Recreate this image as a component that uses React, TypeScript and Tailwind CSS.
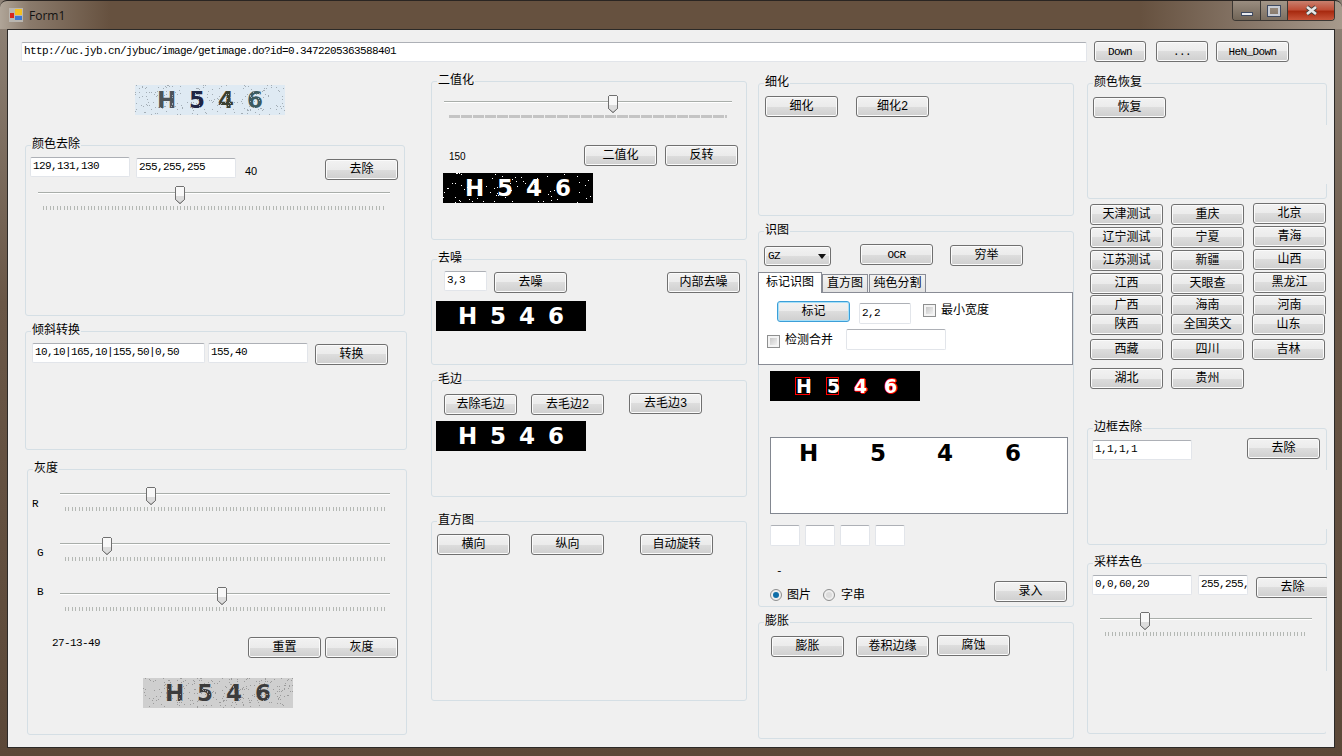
import type { ReactNode } from 'react';

const ASCII = "text-[11px] tracking-[-0.6px]";

function Btn({ children, className = "", ascii = false, focused = false, w = "w-[73px]" }: { children: ReactNode; className?: string; ascii?: boolean; focused?: boolean; w?: string }) {
  return (
    <div
      className={
        "shrink-0 h-[21px] pt-px flex items-center justify-center rounded-[3px] border bg-[linear-gradient(#f2f2f2_0%,#ebebeb_50%,#dddddd_50%,#cfcfcf_100%)] " +
        (focused ? "border-[#3c9fd8] shadow-[inset_0_0_0_1px_#a8e0f8] " : "border-[#707070] shadow-[inset_0_0_0_1px_#fbfbfb] ") +
        (ascii ? ASCII + " " : "") +
        w + " " +
        className
      }
    >
      {children}
    </div>
  );
}

function Input({ value = "", className = "" }: { value?: string; className?: string }) {
  return (
    <div className={"shrink-0 h-[20px] bg-white border border-[#e2e5ea] border-t-[#adb0b6] rounded-[2px] pl-[2px] pt-[2px] overflow-hidden whitespace-nowrap " + ASCII + " " + className}>
      {value}
    </div>
  );
}

function Group({ title, className = "", children }: { title: string; className?: string; children?: ReactNode }) {
  return (
    <div className={"relative shrink-0 border border-[#d5dfe5] rounded-[3px] " + className}>
      <span className="absolute -top-[8px] left-[5px] bg-[#f0f0f0] px-px leading-[14px] whitespace-nowrap">{title}</span>
      {children}
    </div>
  );
}

function Slider({ width, at, dashed = false, className = "" }: { width: number; at: number; dashed?: boolean; className?: string }) {
  return (
    <div className={"relative flow-root shrink-0 h-[26px] " + className} style={{ width }}>
      <div className="mt-[6px] h-[2px] bg-[#a9aeaa] border-b border-white" />
      {dashed ? (
        <div className="mx-[5px] mt-[12px] h-[3px] bg-[repeating-linear-gradient(90deg,#c4c4c4_0,#c4c4c4_11px,transparent_11px,transparent_12px)]" />
      ) : (
        <div className="mx-[5px] mt-[12px] h-[4px] bg-[repeating-linear-gradient(90deg,#b4b8b4_0,#b4b8b4_1px,transparent_1px,transparent_3.43px)]" />
      )}
      <svg className="absolute top-0" style={{ left: at - 5 }} width="10" height="18" viewBox="0 0 10 18">
        <path d="M1.5.5h7l1 1v12l-4.5 4-4.5-4v-12z" fill="#f8f8f8" stroke="#707070" />
        <path d="M1 10h8v3.4L5 17l-4-3.6z" fill="#dcdcdc" />
        <path d="M1.5.5h7l1 1v12l-4.5 4-4.5-4v-12z" fill="none" stroke="#707070" />
      </svg>
    </div>
  );
}

function Noise({ count, color, seed }: { count: number; color: string; seed: number }) {
  let s = seed;
  const next = () => {
    s = (s * 16807) % 2147483647;
    return s / 2147483647;
  };
  const dots = [];
  for (let i = 0; i < count; i++) {
    dots.push(<rect key={i} x={Math.floor(next() * 150)} y={Math.floor(next() * 30)} width="1" height="1" fill={color} />);
  }
  return (
    <svg className="absolute inset-0" width="150" height="30">
      {dots}
    </svg>
  );
}

function Captcha({ kind, className = "" }: { kind: "color" | "gray" | "noisy" | "black"; className?: string }) {
  const bg = kind === "color" ? "bg-[#dfeaf3]" : kind === "gray" ? "bg-[#cfcfcf]" : "bg-black";
  const c = kind === "color"
    ? ["text-[#4c5459]", "text-[#1f2545]", "text-[#3a4030]", "text-[#3c5a60]"]
    : kind === "gray"
      ? ["text-[#3c3c3c]", "text-[#3c3c3c]", "text-[#3c3c3c]", "text-[#3c3c3c]"]
      : ["text-white", "text-white", "text-white", "text-white"];
  return (
    <div className={"relative shrink-0 w-[150px] h-[30px] overflow-hidden flex pl-[22px] font-['DejaVu_Sans',sans-serif] font-bold text-[23px] leading-[30px] " + bg + " " + className}>
      <span className={"w-[32px] " + c[0]}>H</span>
      <span className={"w-[29px] " + c[1]}>5</span>
      <span className={"w-[29px] " + c[2]}>4</span>
      <span className={c[3]}>6</span>
      {kind === "color" && <Noise count={220} color="#a3adb5" seed={17} />}
      {kind === "gray" && <Noise count={260} color="#9c9c9c" seed={71} />}
      {kind === "noisy" && <Noise count={70} color="#ffffff" seed={29} />}
    </div>
  );
}

function Check({ className = "" }: { className?: string }) {
  return (
    <div className={"shrink-0 w-[13px] h-[13px] border border-[#8e8f8f] bg-[#f4f4f4] p-[2px] " + className}>
      <div className="w-full h-full bg-[linear-gradient(135deg,#c8c8c8,#f0f0f0)]" />
    </div>
  );
}

function Radio({ on = false, className = "" }: { on?: boolean; className?: string }) {
  return (
    <div className={"shrink-0 w-[12px] h-[12px] rounded-full border border-[#8e8f8f] bg-[#eeeeee] flex items-center justify-center " + className}>
      <div className={"w-[6px] h-[6px] rounded-full " + (on ? "bg-[#0f6ea8]" : "bg-[#dcdcdc]")} />
    </div>
  );
}

const col1 = [
  ["天津测试", "mt-[5px]"], ["辽宁测试", "mt-[2px]"], ["江苏测试", "mt-[2px]"], ["江西", "mt-[2px]"],
  ["广西", "mt-[1px]", true], ["陕西", "mt-0"], ["西藏", "mt-[4px]"], ["湖北", "mt-[8px]"],
] as const;
const col2 = [
  ["重庆", "mt-[5px]"], ["宁夏", "mt-[2px]"], ["新疆", "mt-[2px]"], ["天眼查", "mt-[2px]"],
  ["海南", "mt-[1px]", true], ["全国英文", "mt-0"], ["四川", "mt-[4px]"], ["贵州", "mt-[8px]"],
] as const;
const col3 = [
  ["北京", "mt-[4px] ml-px"], ["青海", "mt-[2px] ml-px"], ["山西", "mt-[2px] ml-px"], ["黑龙江", "mt-[2px] ml-px"],
  ["河南", "mt-[2px] ml-px", true], ["山东", "mt-0"], ["吉林", "mt-[4px]"],
] as const;

function CityColumn({ items, className = "" }: { items: readonly (readonly [string, string, boolean?])[]; className?: string }) {
  return (
    <div className={"flex flex-col w-[74px] " + className}>
      {items.map(([name, cls, clipped]) => (
        <div key={name} className={cls + (clipped ? " h-[19px] overflow-hidden" : "")}>
          <Btn>{name}</Btn>
        </div>
      ))}
    </div>
  );
}

function TitleBar() {
  return (
    <div className="relative shrink-0 h-[29px] flex justify-between rounded-t-[7px] border-t border-[#2a2522] bg-[linear-gradient(90deg,#b0a598_0,#8a7a6b_30px,#66513f_110px,#66513f_1140px,#8a7a6c_1260px,#a79a8c_1342px)]">
      <div className="flex">
        <svg className="ml-[9px] mt-[7px]" width="14" height="14" viewBox="0 0 14 14">
          <rect width="14" height="14" fill="#b9b6b0" />
          <rect x="1" y="5" width="4" height="5" fill="#d8261c" />
          <rect x="6" y="1" width="7" height="6" fill="#f4c020" />
          <rect x="6" y="8" width="7" height="4" fill="#3f78d0" />
        </svg>
        <span className="ml-[6px] mt-[7px] font-['Open_Sans',sans-serif] text-[12px] leading-[16px] text-[#111111]">Form1</span>
      </div>
      <div className="flex h-[20px] mr-[7px] border border-t-0 border-[#3b3733] rounded-b-[4px] overflow-hidden">
        <div className="w-[28px] flex items-end justify-center pb-[4px] border-r border-[#3b3733] bg-[linear-gradient(#9a8d80,#716557)]">
          <div className="w-[12px] h-[4px] bg-[#e8ebf0] border border-[#3f4a60]" />
        </div>
        <div className="w-[27px] flex items-center justify-center border-r border-[#3b3733] bg-[linear-gradient(#a39688,#7c6f61)]">
          <div className="w-[12px] h-[10px] border-2 border-[#c8ccd4] outline outline-1 outline-[#3f4a60]" />
        </div>
        <div className="w-[46px] flex items-center justify-center bg-[linear-gradient(#c9806e_0%,#c04f38_45%,#a82a10_55%,#c8553a_100%)]">
          <svg width="15" height="11" viewBox="0 0 15 11">
            <path d="M3 2l9 7M12 2L3 9" stroke="#47403c" strokeWidth="4.5" />
            <path d="M3 2l9 7M12 2L3 9" stroke="#e8e8e8" strokeWidth="2.6" />
          </svg>
        </div>
      </div>
    </div>
  );
}

function ColumnOne() {
  return (
    <div className="flex flex-col shrink-0 w-[383px] ml-[17px]">
      <Captcha kind="color" className="mt-[23px] ml-[110px]" />
      <Group title="颜色去除" className="mt-[30px] w-[380px] h-[171px]">
        <div className="flex items-start pl-[4px] pt-[11px]">
          <Input value="129,131,130" className="w-[100px]" />
          <Input value="255,255,255" className="w-[100px] ml-[6px] mt-px" />
          <span className="w-[80px] ml-[9px] mt-[8px] font-['Liberation_Sans',sans-serif] text-[11px]">40</span>
          <Btn className="mt-[2px]">去除</Btn>
        </div>
        <Slider width={352} at={142} className="ml-[12px] mt-[6px]" />
      </Group>
      <Group title="倾斜转换" className="mt-[15px] w-[382px] h-[119px]">
        <div className="flex items-start pl-[6px] pt-[11px]">
          <Input value="10,10|165,10|155,50|0,50" className="w-[173px]" />
          <Input value="155,40" className="w-[100px] ml-[3px]" />
          <Btn className="ml-[7px] mt-px">转换</Btn>
        </div>
      </Group>
      <Group title="灰度" className="mt-[19px] ml-[2px] w-[380px] h-[266px]">
        <div className="flex h-[50px] mt-[17px]">
          <span className={"w-[32px] pl-[4px] mt-[11px] " + ASCII}>R</span>
          <Slider width={330} at={91} />
        </div>
        <div className="flex h-[50px]">
          <span className={"w-[32px] pl-[9px] mt-[10px] " + ASCII}>G</span>
          <Slider width={330} at={47} />
        </div>
        <div className="flex h-[50px]">
          <span className={"w-[32px] pl-[9px] -mt-px " + ASCII}>B</span>
          <Slider width={330} at={162} />
        </div>
        <div className="flex">
          <span className={"w-[220px] pl-[24px] " + ASCII}>27-13-49</span>
          <Btn>重置</Btn>
          <Btn className="ml-[4px]">灰度</Btn>
        </div>
        <Captcha kind="gray" className="mt-[20px] ml-[115px]" />
      </Group>
    </div>
  );
}

function ColumnTwo() {
  return (
    <div className="flex flex-col shrink-0 w-[317px] ml-[23px]">
      <Group title="二值化" className="mt-[19px] w-[316px] h-[159px]">
        <Slider width={288} at={169} dashed className="ml-[12px] mt-[13px]" />
        <div className="flex mt-[24px] ml-[17px]">
          <span className="w-[135px] mt-[6px] font-['Liberation_Sans',sans-serif] text-[10px]">150</span>
          <Btn>二值化</Btn>
          <Btn className="ml-[8px]">反转</Btn>
        </div>
        <Captcha kind="noisy" className="mt-[7px] ml-[11px]" />
      </Group>
      <Group title="去噪" className="mt-[19px] w-[316px] h-[106px]">
        <div className="flex items-start mt-[11px] ml-[12px]">
          <Input value="3,3" className="w-[43px]" />
          <Btn className="ml-[7px] mt-px">去噪</Btn>
          <Btn className="ml-[100px] mt-px">内部去噪</Btn>
        </div>
        <Captcha kind="black" className="mt-[8px] ml-[4px]" />
      </Group>
      <Group title="毛边" className="mt-[15px] w-[316px] h-[117px]">
        <div className="flex items-start mt-[12px] ml-[12px]">
          <Btn className="mt-px">去除毛边</Btn>
          <Btn className="ml-[14px] mt-px">去毛边2</Btn>
          <Btn className="ml-[25px]">去毛边3</Btn>
        </div>
        <Captcha kind="black" className="mt-[6px] ml-[4px]" />
      </Group>
      <Group title="直方图" className="mt-[24px] w-[316px] h-[180px]">
        <div className="flex mt-[12px] ml-[5px]">
          <Btn>横向</Btn>
          <Btn className="ml-[21px]">纵向</Btn>
          <Btn className="ml-[36px]">自动旋转</Btn>
        </div>
      </Group>
    </div>
  );
}

function ColumnThree() {
  return (
    <div className="flex flex-col shrink-0 w-[317px] ml-[10px]">
      <Group title="细化" className="mt-[21px] w-[316px] h-[133px]">
        <div className="flex mt-[12px] ml-[6px]">
          <Btn>细化</Btn>
          <Btn className="ml-[18px]">细化2</Btn>
        </div>
      </Group>
      <Group title="识图" className="mt-[15px] w-[316px] h-[376px]">
        <div className="flex items-start mt-[12px]">
          <div className="relative shrink-0 ml-[5px] mt-[2px] w-[67px] h-[20px] rounded-[3px] border border-[#707070] shadow-[inset_0_0_0_1px_#fbfbfb] bg-[linear-gradient(#f2f2f2_0%,#ebebeb_50%,#dddddd_50%,#cfcfcf_100%)] flex items-center justify-between pl-[3px] pr-[4px]">
            <span className={ASCII}>GZ</span>
            <svg width="8" height="5" viewBox="0 0 8 5"><path d="M0 0h8L4 5z" fill="#111111" /></svg>
          </div>
          <Btn ascii className="ml-[29px]">OCR</Btn>
          <Btn className="ml-[17px] mt-px">穷举</Btn>
        </div>
        <div className="flex items-end h-[20px] mt-[6px] -ml-px">
          <div className="relative z-10 w-[64px] h-[21px] -mb-px bg-white border border-b-0 border-[#898c95] flex items-center justify-center">标记识图</div>
          <div className="w-[46px] h-[18px] border border-b-0 border-[#898c95] bg-[linear-gradient(#f3f3f3,#e2e2e2)] flex items-center justify-center">直方图</div>
          <div className="w-[57px] h-[18px] ml-px border border-b-0 border-[#898c95] bg-[linear-gradient(#f3f3f3,#e2e2e2)] flex items-center justify-center">纯色分割</div>
        </div>
        <div className="flow-root w-[315px] h-[73px] -ml-px bg-white border border-[#898c95]">
          <div className="flex items-start ml-[18px] mt-[8px]">
            <Btn focused>标记</Btn>
            <Input value="2,2" className="w-[52px] h-[21px] ml-[9px] mt-[2px] pt-[3px]" />
            <Check className="ml-[12px] mt-[3px]" />
            <span className="ml-[5px] mt-[4px]">最小宽度</span>
          </div>
          <div className="flex items-start ml-[8px] mt-[5px] h-[21px]">
            <Check className="mt-[6px]" />
            <span className="ml-[5px] mt-[6px]">检测合并</span>
            <Input className="w-[100px] h-[21px] ml-[13px]" />
          </div>
        </div>
        <div className="flex items-center w-[150px] h-[30px] mt-[6px] ml-[11px] pl-[25px] bg-black text-white font-['DejaVu_Sans',sans-serif] font-bold text-[19px]">
          <span className="w-[31px]"><span className="block w-[15px] h-[18px] leading-[16px] text-center border border-[#ff0000]">H</span></span>
          <span className="w-[28px]"><span className="block w-[13px] h-[18px] leading-[16px] text-center border border-[#ff0000]">5</span></span>
          <span className="w-[30px] [text-shadow:1px_0_#ff0000,-1px_0_#ff0000,0_1px_#ff0000,0_-1px_#ff0000]">4</span>
          <span className="[text-shadow:1px_0_#ff0000,-1px_0_#ff0000,0_1px_#ff0000,0_-1px_#ff0000]">6</span>
        </div>
        <div className="flex w-[298px] h-[77px] mt-[36px] ml-[11px] pl-[28px] bg-white border border-[#828790] font-['DejaVu_Sans',sans-serif] font-bold text-[23px] leading-[30px]">
          <span className="w-[71px]">H</span>
          <span className="w-[67px]">5</span>
          <span className="w-[68px]">4</span>
          <span>6</span>
        </div>
        <div className="flex gap-[5px] mt-[11px] ml-[11px]">
          <Input className="w-[30px] h-[21px]" />
          <Input className="w-[30px] h-[21px]" />
          <Input className="w-[30px] h-[21px]" />
          <Input className="w-[30px] h-[21px] border-[#c5d6e6] border-t-[#a8bdd0]" />
        </div>
        <div className={"mt-[19px] ml-[17px] leading-[12px] " + ASCII}>-</div>
        <div className="flex items-start mt-[4px] ml-[11px]">
          <Radio on className="mt-[8px]" />
          <span className="ml-[5px] mt-[9px]">图片</span>
          <Radio className="ml-[12px] mt-[8px]" />
          <span className="ml-[6px] mt-[9px]">字串</span>
          <Btn className="ml-[129px]">录入</Btn>
        </div>
      </Group>
      <Group title="膨胀" className="mt-[15px] w-[316px] h-[117px]">
        <div className="flex items-start mt-[12px] ml-[12px]">
          <Btn className="mt-px">膨胀</Btn>
          <Btn className="ml-[12px] mt-px">卷积边缘</Btn>
          <Btn className="ml-[8px]">腐蚀</Btn>
        </div>
      </Group>
    </div>
  );
}

function BorderGap({ className }: { className: string }) {
  return <div className={"absolute -right-px w-px bg-[#f0f0f0] " + className} />;
}

function ColumnFour() {
  return (
    <div className="flex flex-col shrink-0 w-[240px] ml-[12px]">
      <Group title="颜色恢复" className="mt-[21px] w-[240px] h-[116px]">
        <Btn className="mt-[13px] ml-[5px]">恢复</Btn>
        <BorderGap className="top-[41px] h-[59px]" />
      </Group>
      <div className="flex ml-[3px]">
        <CityColumn items={col1} />
        <CityColumn items={col2} className="ml-[7px]" />
        <CityColumn items={col3} className="ml-[7px]" />
      </div>
      <Group title="边框去除" className="mt-[39px] w-[240px] h-[117px]">
        <div className="flex items-start ml-[4px]">
          <Input value="1,1,1,1" className="w-[100px] mt-[11px]" />
          <Btn className="ml-[55px] mt-[9px]">去除</Btn>
        </div>
        <BorderGap className="top-[41px] h-[59px]" />
      </Group>
      <Group title="采样去色" className="mt-[18px] w-[240px] h-[171px]">
        <div className="flex items-start ml-[4px]">
          <Input value="0,0,60,20" className="w-[100px] mt-[11px]" />
          <Input value="255,255," className="w-[50px] ml-[6px] mt-[11px]" />
          <div className="w-[71px] ml-[8px] mt-[13px] overflow-hidden shrink-0">
            <Btn>去除</Btn>
          </div>
        </div>
        <Slider width={212} at={45} className="ml-[12px] mt-[14px]" />
        <BorderGap className="top-[107px] h-[62px]" />
      </Group>
    </div>
  );
}

export default function App() {
  return (
    <div className="w-[1342px] h-[756px] overflow-hidden flex flex-col bg-[linear-gradient(#8f8377,#6a5747_40%,#5b4838)] text-black text-[12px] leading-[12px] font-['Liberation_Mono','Noto_Sans_CJK_SC',monospace]">
      <TitleBar />
      <div className="shrink-0 mx-[7px] h-[719px] bg-[#f0f0f0] border border-[#2c2a28]">
        <div className="flex items-start pt-[11px] h-[32px]">
          <Input
            value="http://uc.jyb.cn/jybuc/image/getimage.do?id=0.3472205363588401"
            className="w-[1066px] ml-[13px] mt-px border-[#dfe3e8]"
          />
          <Btn ascii w="w-[52px]" className="ml-[7px]">Down</Btn>
          <Btn ascii w="w-[52px]" className="ml-[10px]">...</Btn>
          <Btn ascii className="ml-[8px]">HeN_Down</Btn>
        </div>
        <div className="flex items-start">
          <ColumnOne />
          <ColumnTwo />
          <ColumnThree />
          <ColumnFour />
        </div>
      </div>
    </div>
  );
}
